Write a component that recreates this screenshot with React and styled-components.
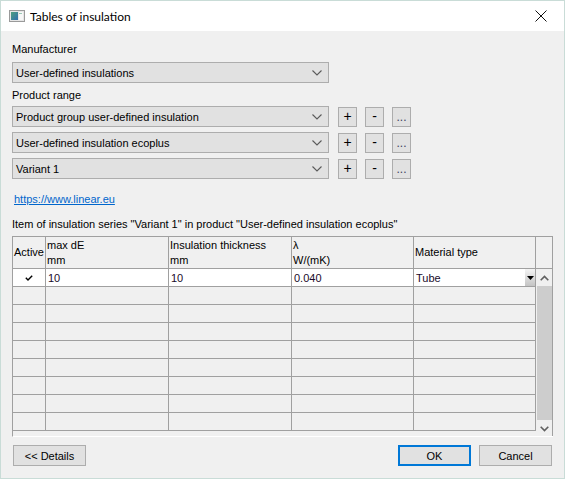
import React from 'react'
import styled, { createGlobalStyle } from 'styled-components'

const GlobalStyle = createGlobalStyle`
  html, body {
    margin: 0;
    padding: 0;
    background: #ffffff;
  }
  * {
    box-sizing: border-box;
  }
`

const UI_FONT = `"Liberation Sans", Arial, sans-serif`
const TITLE_FONT = `Lato, "Liberation Sans", sans-serif`
const GRID_FONT = `"Liberation Sans", Arial, sans-serif`

function TitleIcon() {
  return (
    <svg width="16" height="14" viewBox="0 0 16 14">
      <defs>
        <linearGradient id="ti" x1="0" y1="0" x2="1" y2="1">
          <stop offset="0" stopColor="#4e9f7e" />
          <stop offset="1" stopColor="#2f6fae" />
        </linearGradient>
      </defs>
      <rect x="0.5" y="1.5" width="15" height="11" fill="#e6e6e6" stroke="#9a9a9a" />
      <rect x="2" y="3" width="7" height="8" fill="url(#ti)" />
      <rect x="10" y="3" width="4" height="8" fill="#f7f7f7" />
      <rect x="10" y="4" width="3" height="1" fill="#9bc8b6" />
    </svg>
  )
}

function Chevron() {
  return (
    <svg width="10" height="6" viewBox="0 0 10 6">
      <polyline points="0.5,0.5 5,5 9.5,0.5" fill="none" stroke="#5a5a5a" strokeWidth="1.1" />
    </svg>
  )
}

function ArrowUp() {
  return (
    <svg width="9" height="6" viewBox="0 0 9 6">
      <polyline points="0.7,5.3 4.5,1.5 8.3,5.3" fill="none" stroke="#606060" strokeWidth="1.6" />
    </svg>
  )
}

function ArrowDown() {
  return (
    <svg width="9" height="6" viewBox="0 0 9 6">
      <polyline points="0.7,0.7 4.5,4.5 8.3,0.7" fill="none" stroke="#606060" strokeWidth="1.6" />
    </svg>
  )
}

function Check() {
  return (
    <svg width="8" height="6" viewBox="0 0 8 6">
      <polyline points="0.8,2.8 3,5 7.2,0.8" fill="none" stroke="#000" strokeWidth="1.4" />
    </svg>
  )
}

function Combo({ value }) {
  return (
    <ComboBox>
      <span>{value}</span>
      <Chevron />
    </ComboBox>
  )
}

function ProductRow({ value }) {
  return (
    <Row>
      <Combo value={value} />
      <SmallButton>+</SmallButton>
      <SmallButton>-</SmallButton>
      <SmallButton dots>...</SmallButton>
    </Row>
  )
}

const columns = [33, 123, 123, 122, 122]
const emptyRows = 8

function App() {
  return (
    <>
      <GlobalStyle />
      <Window>
        <TitleBar>
          <TitleIcon />
          <Title>Tables of insulation</Title>
          <CloseButton>
            <svg width="12" height="12" viewBox="0 0 12 12">
              <path d="M0.5 0.5 L11.5 11.5 M11.5 0.5 L0.5 11.5" stroke="#111" strokeWidth="1" />
            </svg>
          </CloseButton>
        </TitleBar>
        <Body>
          <Label>Manufacturer</Label>
          <Row top={5}>
            <Combo value="User-defined insulations" />
          </Row>
          <Label top={5}>Product range</Label>
          <ProductList>
            <ProductRow value="Product group user-defined insulation" />
            <ProductRow value="User-defined insulation ecoplus" />
            <ProductRow value="Variant 1" />
          </ProductList>
          <Link href="#">https://www.linear.eu</Link>
          <Label top={10}>
            Item of insulation series "Variant 1" in product "User-defined insulation ecoplus"
          </Label>
          <Grid>
            <HeaderRow>
              <HeaderCell w={columns[0]}>Active</HeaderCell>
              <HeaderCell w={columns[1]}>max dE<br />mm</HeaderCell>
              <HeaderCell w={columns[2]}>Insulation thickness<br />mm</HeaderCell>
              <HeaderCell w={columns[3]}>λ<br />W/(mK)</HeaderCell>
              <HeaderCell w={columns[4]}>Material type</HeaderCell>
              <HeaderCell w={17} />
            </HeaderRow>
            <GridBody>
              <Rows>
                <DataRow active>
                  <Cell w={columns[0]} center><Check /></Cell>
                  <Cell w={columns[1]}>10</Cell>
                  <Cell w={columns[2]}>10</Cell>
                  <Cell w={columns[3]}>0.040</Cell>
                  <Cell w={columns[4]}>
                    Tube
                    <CellDrop>
                      <svg width="7" height="4" viewBox="0 0 7 4">
                        <polygon points="0,0 7,0 3.5,4" fill="#000" />
                      </svg>
                    </CellDrop>
                  </Cell>
                </DataRow>
                {Array.from({ length: emptyRows }).map((_, i) => (
                  <DataRow key={i}>
                    {columns.map((w, j) => (
                      <Cell key={j} w={w} />
                    ))}
                  </DataRow>
                ))}
              </Rows>
              <ScrollBar>
                <ScrollArrow><ArrowUp /></ScrollArrow>
                <Thumb />
                <Track />
                <ScrollArrow><ArrowDown /></ScrollArrow>
              </ScrollBar>
            </GridBody>
          </Grid>
          <Footer>
            <DialogButton>&lt;&lt; Details</DialogButton>
            <Spacer />
            <DialogButton primary>OK</DialogButton>
            <DialogButton>Cancel</DialogButton>
          </Footer>
        </Body>
      </Window>
    </>
  )
}

export default App

const Window = styled.div`
  width: 565px;
  height: 479px;
  border: 1px solid #c9dcd7;
  background: #f0f0f0;
  display: flex;
  flex-direction: column;
  font-family: ${UI_FONT};
  font-size: 11px;
  color: #000;
  overflow: hidden;
`

const TitleBar = styled.div`
  height: 30px;
  background: #ffffff;
  display: flex;
  align-items: center;
  padding-left: 8px;
  flex-shrink: 0;
`

const Title = styled.div`
  margin-left: 5px;
  font-family: ${TITLE_FONT};
  font-size: 12px;
  flex: 1;
`

const CloseButton = styled.div`
  width: 46px;
  height: 30px;
  display: flex;
  align-items: center;
  justify-content: center;
`

const Body = styled.div`
  flex: 1;
  display: flex;
  flex-direction: column;
  padding: 11px 11px 0 11px;
`

const Label = styled.div`
  height: 15px;
  line-height: 15px;
  margin-top: ${p => p.top || 0}px;
  white-space: nowrap;
`

const Row = styled.div`
  display: flex;
  align-items: center;
  margin-top: ${p => p.top || 0}px;
`

const ProductList = styled.div`
  display: flex;
  flex-direction: column;
  gap: 5px;
  margin-top: 3px;
`

const ComboBox = styled.div`
  width: 317px;
  height: 21px;
  background: #e1e1e1;
  border: 1px solid #adadad;
  display: flex;
  align-items: center;
  justify-content: space-between;
  padding: 0 6px 0 3px;
  margin-right: 8px;
`

const SmallButton = styled.div`
  width: 19px;
  height: 20px;
  margin-left: 1px;
  margin-right: 7px;
  background: #e1e1e1;
  border: 1px solid #adadad;
  display: flex;
  align-items: ${p => (p.dots ? 'flex-end' : 'center')};
  justify-content: center;
  padding-bottom: ${p => (p.dots ? '3px' : '1px')};
  line-height: 1;
  font-size: ${p => (p.dots ? '12px' : '14px')};
  color: ${p => (p.dots ? '#404060' : '#000')};
`

const Link = styled.a`
  margin-top: 13px;
  margin-left: 2px;
  height: 15px;
  line-height: 15px;
  color: #0066cc;
  text-decoration: underline;
  align-self: flex-start;
`

const Grid = styled.div`
  margin-top: 4px;
  width: 541px;
  height: 201px;
  border-left: 1px solid #a0a0a0;
  border-top: 1px solid #a0a0a0;
  border-bottom: 1px solid #ffffff;
  display: flex;
  flex-direction: column;
  overflow: hidden;
  font-family: ${GRID_FONT};
  font-size: 11px;
  flex-shrink: 0;
`

const HeaderRow = styled.div`
  display: flex;
  height: 32px;
  flex-shrink: 0;
`

const HeaderCell = styled.div`
  width: ${p => p.w}px;
  height: 32px;
  border-right: 1px solid #a0a0a0;
  border-bottom: 1px solid #a0a0a0;
  display: flex;
  align-items: center;
  padding-left: 1px;
  line-height: 15px;
  background: #f0f0f0;
  white-space: nowrap;
  overflow: hidden;
`

const GridBody = styled.div`
  display: flex;
  flex: 1;
  min-height: 0;
`

const Rows = styled.div`
  display: flex;
  flex-direction: column;
  overflow: hidden;
`

const DataRow = styled.div`
  display: flex;
  height: 18px;
  flex-shrink: 0;
  background: ${p => (p.active ? '#ffffff' : '#f0f0f0')};
`

const Cell = styled.div`
  width: ${p => p.w}px;
  height: 18px;
  border-right: 1px solid #a0a0a0;
  border-bottom: 1px solid #a0a0a0;
  display: flex;
  align-items: center;
  justify-content: ${p => (p.center ? 'center' : 'flex-start')};
  padding-left: ${p => (p.center ? 0 : 2)}px;
  position: relative;
  color: #1a0a2a;
  font-size: 11px;
`

const CellDrop = styled.div`
  position: absolute;
  right: 0;
  top: 0;
  width: 10px;
  height: 17px;
  background: linear-gradient(to bottom, #f4f4f4, #c4c4c4);
  display: flex;
  align-items: center;
  justify-content: center;
`

const ScrollBar = styled.div`
  width: 17px;
  display: flex;
  flex-direction: column;
  background: #f0f0f0;
  border-right: 1px solid #a0a0a0;
`

const ScrollArrow = styled.div`
  height: 17px;
  display: flex;
  align-items: center;
  justify-content: center;
  flex-shrink: 0;
`

const Thumb = styled.div`
  height: 134px;
  margin: 0 0 0 1px;
  background: #cdcdcd;
  flex-shrink: 0;
`

const Track = styled.div`
  flex: 1;
`

const Footer = styled.div`
  display: flex;
  align-items: center;
  margin-top: 8px;
  padding-left: 1px;
  padding-right: 1px;
  gap: 8px;
`

const Spacer = styled.div`
  flex: 1;
`

const DialogButton = styled.div`
  width: 73px;
  height: 21px;
  background: #e1e1e1;
  border: ${p => (p.primary ? '2px solid #0078d7' : '1px solid #adadad')};
  display: flex;
  align-items: center;
  justify-content: center;
  font-size: 11px;
`
